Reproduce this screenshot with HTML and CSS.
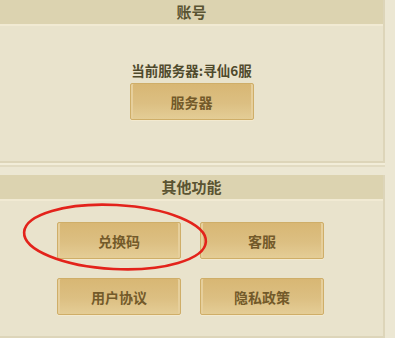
FILE: index.html
```html
<!DOCTYPE html>
<html lang="zh-CN">
<head>
    <meta charset="UTF-8">
    <meta name="viewport" content="width=device-width, initial-scale=1.0">
    <title>设置</title>
    <link rel="stylesheet" href="styles.css">
</head>
<body>
    <div class="page">
        <div class="panel account">
            <div class="panel-head">账号</div>
            <div class="panel-body">
                <div class="server-name">当前服务器:寻仙6服</div>
                <button class="gold-btn">服务器</button>
            </div>
        </div>
        <div class="panel other">
            <div class="panel-head">其他功能</div>
            <div class="panel-body">
                <div class="btn-grid">
                    <button class="gold-btn">兑换码</button>
                    <button class="gold-btn">客服</button>
                    <button class="gold-btn">用户协议</button>
                    <button class="gold-btn">隐私政策</button>
                </div>
                <svg class="mark" width="190" height="72" viewBox="0 0 190 72">
                    <ellipse cx="95" cy="36" rx="91" ry="32" fill="none" stroke="#e3231b" stroke-width="2.6" transform="rotate(3 95 36)"/>
                </svg>
            </div>
        </div>
    </div>
</body>
</html>
```

FILE: styles.css
```css
body {
    margin: 0;
    background: #ece7d3;
    font-family: "Noto Sans CJK SC", "Noto Sans", sans-serif;
    width: 395px;
    height: 338px;
    overflow: hidden;
}
.page {
    width: 385px;
}
.panel {
    background: #e9e3cc;
    border-right: 2px solid #ddd5b9;
    border-bottom: 2px solid #ddd5b9;
    box-shadow: 0 2px 0 #f2edd9, 0 4px 0 #e2dbc2;
}
.panel-head {
    height: 24px;
    line-height: 24px;
    background: #dcd3b0;
    border-bottom: 2px solid #f1ead3;
    text-align: center;
    font-size: 15px;
    font-weight: bold;
    color: #5a5432;
}
.account .panel-body {
    height: 135px;
    display: flex;
    flex-direction: column;
    align-items: center;
    padding-top: 35px;
    box-sizing: border-box;
}
.server-name {
    font-size: 13.5px;
    font-weight: bold;
    color: #4f4a2c;
    line-height: 18px;
    margin-bottom: 4px;
}
.gold-btn {
    width: 124px;
    height: 37px;
    border: 1px solid #cfae68;
    border-radius: 2px;
    background: linear-gradient(#d8b774, #dcbf82 55%, #e4cd96);
    box-shadow: inset 2px 0 0 #e6cf9c, inset -2px 0 0 #e6cf9c, 0 1px 0 #f3ead0;
    font-family: inherit;
    font-size: 14px;
    font-weight: bold;
    color: #735a2a;
    padding: 0;
}
.other {
    margin-top: 12px;
}
.other .panel-body {
    position: relative;
    height: 135px;
    padding-top: 21px;
    box-sizing: border-box;
}
.btn-grid {
    display: grid;
    grid-template-columns: 124px 124px;
    column-gap: 19px;
    row-gap: 19px;
    justify-content: center;
    padding-right: 2px;
}
.mark {
    position: absolute;
    left: 20px;
    top: 0px;
}
```
